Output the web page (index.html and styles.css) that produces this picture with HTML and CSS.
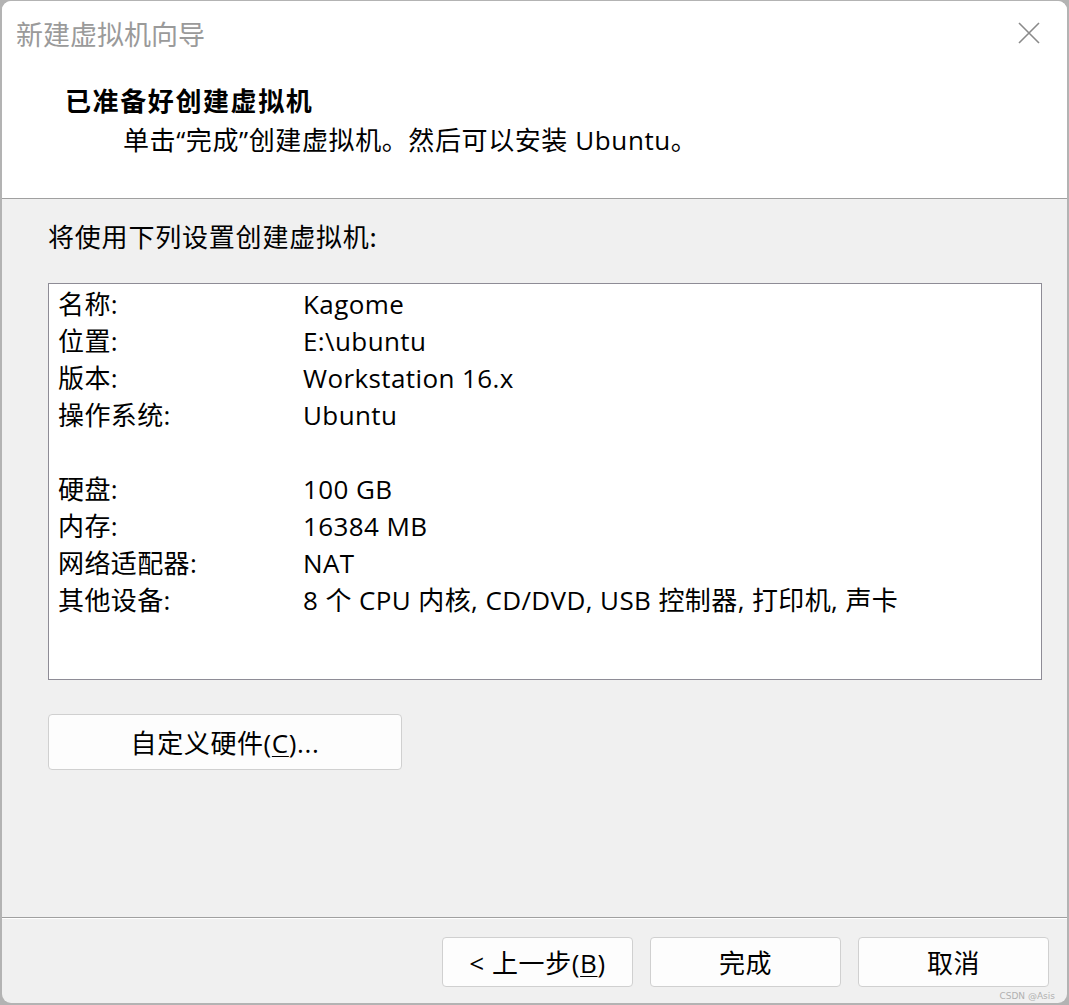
FILE: index.html
```html
<!DOCTYPE html>
<html lang="zh-CN">
<head>
<meta charset="utf-8">
<title>新建虚拟机向导</title>
<link rel="stylesheet" href="styles.css">
</head>
<body>
<div class="window">
  <div class="header">
    <div class="titlebar">
      <span class="wtitle">新建虚拟机向导</span>
      <svg class="close" width="22" height="22" viewBox="0 0 22 22"><path d="M1 1 L21 21 M21 1 L1 21" stroke="#8a8a8a" stroke-width="1.6" fill="none"/></svg>
    </div>
    <div class="heading">已准备好创建虚拟机</div>
    <div class="sub">单击“完成”创建虚拟机。然后可以安装 Ubuntu。</div>
  </div>
  <div class="body">
    <div class="intro">将使用下列设置创建虚拟机:</div>
    <div class="list">
      <div class="row"><span class="k">名称:</span><span class="v">Kagome</span></div>
      <div class="row"><span class="k">位置:</span><span class="v">E:\ubuntu</span></div>
      <div class="row"><span class="k">版本:</span><span class="v">Workstation 16.x</span></div>
      <div class="row"><span class="k">操作系统:</span><span class="v">Ubuntu</span></div>
      <div class="row"><span class="k"></span><span class="v"></span></div>
      <div class="row"><span class="k">硬盘:</span><span class="v">100 GB</span></div>
      <div class="row"><span class="k">内存:</span><span class="v">16384 MB</span></div>
      <div class="row"><span class="k">网络适配器:</span><span class="v">NAT</span></div>
      <div class="row"><span class="k">其他设备:</span><span class="v">8 个 CPU 内核, CD/DVD, USB 控制器, 打印机, 声卡</span></div>
    </div>
    <button class="btn custom">自定义硬件(<u>C</u>)...</button>
  </div>
  <div class="footer">
    <button class="btn fbtn">&lt; 上一步(<u>B</u>)</button>
    <button class="btn fbtn">完成</button>
    <button class="btn fbtn">取消</button>
    <span class="wm">CSDN @Asis</span>
  </div>
</div>
</body>
</html>
```
FILE: styles.css
```css
* { box-sizing: border-box; }
html, body { margin: 0; padding: 0; }
body {
  background: #b3b3b3;
  width: 1069px;
  height: 1005px;
  overflow: hidden;
  font-family: "Open Sans", "Noto Sans CJK SC", sans-serif;
  color: #000;
}
.window {
  margin: 1px 0 0 2px;
  width: 1065px;
  height: 1002px;
  background: #f0f0f0;
  border-radius: 9px;
  overflow: hidden;
  display: flex;
  flex-direction: column;
  position: relative;
}
.header {
  background: #fff;
  height: 198px;
  border-bottom: 1px solid #a0a0a0;
  flex: none;
}
.titlebar {
  height: 66px;
  display: flex;
  align-items: center;
  justify-content: space-between;
  padding: 0 27px 2px 14px;
}
.wtitle {
  font-size: 27px;
  color: #9a9a9a;
  font-family: "Noto Sans CJK SC", sans-serif;
}
.close { display: block; }
.heading {
  font-family: "Noto Sans CJK SC", sans-serif;
  font-weight: bold;
  font-size: 26px;
  letter-spacing: 1.6px;
  line-height: 34px;
  padding-left: 63px;
  margin-top: 16px;
}
.sub {
  font-size: 26px;
  letter-spacing: 0.6px;
  line-height: 34px;
  padding-left: 121px;
  margin-top: 6px;
}
.body {
  flex: none;
  height: 719px;
  padding: 17px 0 0 46px;
  border-bottom: 1px solid #a0a0a0;
}
.intro {
  font-size: 26px;
  letter-spacing: 0.8px;
  line-height: 40px;
  font-family: "Noto Sans CJK SC", sans-serif;
}
.list {
  margin-top: 27px;
  width: 994px;
  height: 397px;
  background: #fff;
  border: 1px solid #8e8c96;
  padding: 2px 0 0 9px;
}
.row {
  display: flex;
  height: 37px;
  line-height: 37px;
  font-size: 26px;
  letter-spacing: 0.4px;
  white-space: nowrap;
}
.k { width: 245px; flex: none; }
.v { flex: none; }
.btn {
  font: inherit;
  font-size: 26px;
  letter-spacing: 0.6px;
  color: #000;
  background: #fdfdfd;
  border: 1px solid #d0d0d0;
  border-radius: 4px;
  padding: 0;
}
.btn u { text-underline-offset: 3px; text-decoration-thickness: 1px; }
.custom {
  display: block;
  margin-top: 34px;
  width: 354px;
  height: 56px;
}
.footer {
  flex: 1;
  border-top: 1px solid #fff;
  display: flex;
  justify-content: flex-end;
  align-items: flex-start;
  gap: 17px;
  padding: 18px 18px 0 0;
  position: relative;
}
.fbtn {
  width: 191px;
  height: 50px;
}
.wm {
  position: absolute;
  right: 12px;
  bottom: 2px;
  font-family: "DejaVu Sans", sans-serif;
  font-size: 9px;
  color: #b0b0b0;
}
```
